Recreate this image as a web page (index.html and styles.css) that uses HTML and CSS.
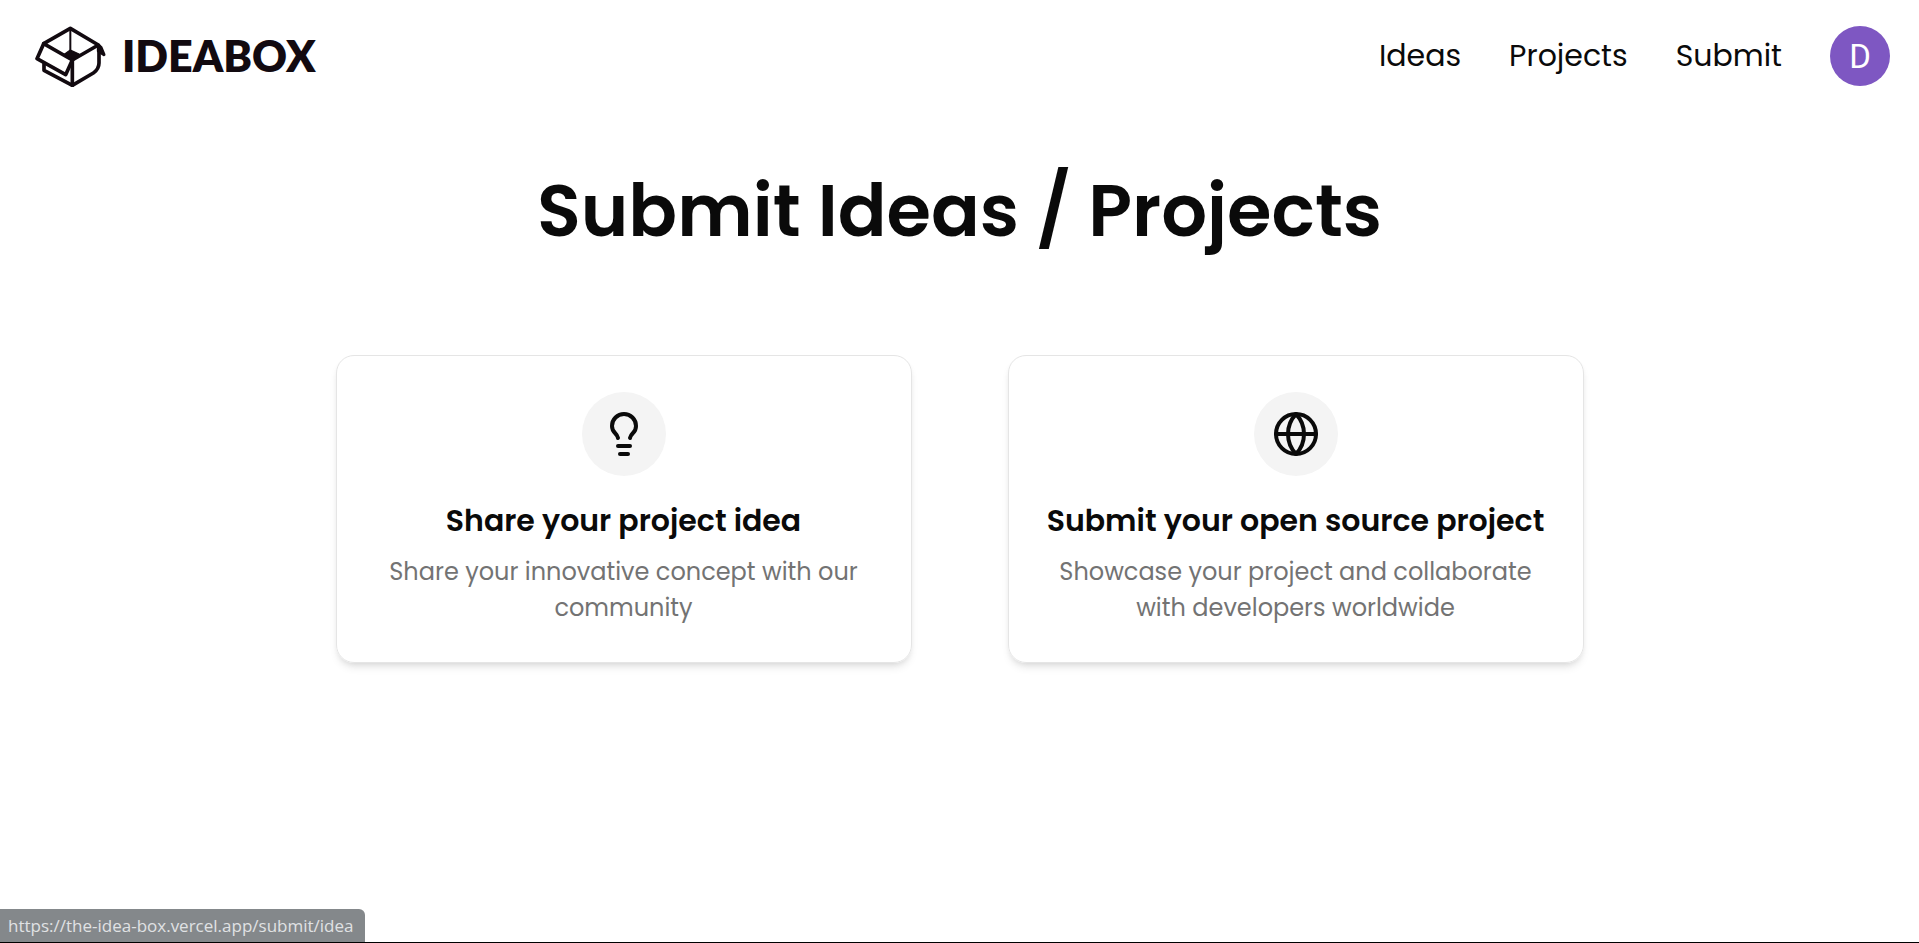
FILE: index.html
```html
<!DOCTYPE html>
<html lang="en">
<head>
    <meta charset="UTF-8">
    <meta name="viewport" content="width=device-width, initial-scale=1.0">
    <title>IdeaBox - Submit</title>
    <link rel="stylesheet" href="styles.css">
</head>
<body>
    <header class="header">
        <a href="/" class="logo">
            <svg class="logo-mark" viewBox="15 15 213 183" fill="none" stroke="currentColor" stroke-width="11" stroke-linejoin="round" stroke-linecap="round">
                <!-- rim -->
                <path d="M41 68 L121 22 L205 72 L127 117 Z"/>
                <path d="M121 22 V92" stroke-width="6"/>
                <path d="M103 100 L121 87 L147 99 L127 116 Z" fill="currentColor" stroke-width="4"/>
                <!-- flaps -->
                <path d="M41 68 L21 113 L107 161 L127 117"/>
                <path d="M205 72 L213 79 L222 101 L205 90 Z" fill="currentColor" stroke-width="9"/>
                <!-- body -->
                <path d="M42 129 V148 L127 193 L190 156 Q207 144 207 126 V76"/>
                <path d="M127 117 V193"/>
            </svg>
            <span class="logo-text">IDEABOX</span>
        </a>
        <nav class="nav">
            <a href="/ideas">Ideas</a>
            <a href="/projects">Projects</a>
            <a href="/submit">Submit</a>
            <button type="button" class="avatar" aria-label="Account">D</button>
        </nav>
    </header>

    <main class="container">
        <h1>Submit Ideas / Projects</h1>

        <div class="cards">
            <a href="/submit/idea" class="card">
                <span class="card-icon">
                    <svg viewBox="0 0 24 24" fill="none" stroke="currentColor" stroke-width="2" stroke-linecap="round" stroke-linejoin="round">
                        <path d="M15 14c.2-1 .7-1.7 1.5-2.5 1-.9 1.5-2.2 1.5-3.5A6 6 0 0 0 6 8c0 1 .2 2.2 1.5 3.5.7.7 1.3 1.5 1.5 2.5"/>
                        <path d="M9 18h6"/>
                        <path d="M10 22h4"/>
                    </svg>
                </span>
                <h2>Share your project idea</h2>
                <p>Share your innovative concept with our community</p>
            </a>

            <a href="/submit/project" class="card">
                <span class="card-icon">
                    <svg viewBox="0 0 24 24" fill="none" stroke="currentColor" stroke-width="2" stroke-linecap="round" stroke-linejoin="round">
                        <circle cx="12" cy="12" r="10"/>
                        <path d="M12 2a14.5 14.5 0 0 0 0 20 14.5 14.5 0 0 0 0-20"/>
                        <path d="M2 12h20"/>
                    </svg>
                </span>
                <h2>Submit your open source project</h2>
                <p>Showcase your project and collaborate with developers worldwide</p>
            </a>
        </div>
    </main>

    <div class="link-status">
        <span>https://the-idea-box.vercel.app/submit/idea</span>
    </div>
</body>
</html>
```
FILE: styles.css
```css
* {
    margin: 0;
    padding: 0;
    box-sizing: border-box;
}

body {
    font-family: 'Poppins', 'Inter', sans-serif;
    background: #ffffff;
    color: #0a0a0a;
    min-height: 100vh;
}

a {
    color: inherit;
    text-decoration: none;
}

.header {
    display: flex;
    justify-content: space-between;
    align-items: center;
    height: 112px;
    padding: 0 29px 0 35px;
}

.logo {
    display: flex;
    align-items: center;
    gap: 16px;
    color: #120a10;
}

.logo-mark {
    width: 71px;
    height: 61px;
}

.logo-text {
    font-family: 'Lato', sans-serif;
    font-size: 43px;
    font-weight: 800;
    line-height: 60px;
}

.nav {
    display: flex;
    align-items: center;
    gap: 48px;
    font-size: 30px;
    line-height: 42px;
}

.avatar {
    width: 60px;
    height: 60px;
    border: none;
    border-radius: 50%;
    background: #7e57c2;
    color: white;
    font-family: 'Roboto', sans-serif;
    font-size: 33px;
    cursor: pointer;
}

.container {
    max-width: 1248px;
    margin: 0 auto;
    padding-top: 63px;
}

h1 {
    font-size: 72px;
    font-weight: 600;
    line-height: 72px;
    text-align: center;
    margin-bottom: 108px;
}

.cards {
    display: grid;
    grid-template-columns: 1fr 1fr;
    gap: 96px;
}

.card {
    display: flex;
    flex-direction: column;
    align-items: center;
    padding: 36px;
    border: 1px solid #e5e5e5;
    border-radius: 18px;
    box-shadow: 0 6px 9px -2px rgba(0, 0, 0, 0.1), 0 3px 6px -3px rgba(0, 0, 0, 0.1);
    text-align: center;
}

.card-icon {
    display: flex;
    align-items: center;
    justify-content: center;
    width: 84px;
    height: 84px;
    margin-bottom: 24px;
    border-radius: 50%;
    background: #f4f4f4;
}

.card-icon svg {
    width: 48px;
    height: 48px;
}

.card h2 {
    font-size: 30px;
    font-weight: 600;
    line-height: 42px;
    margin-bottom: 12px;
    white-space: nowrap;
}

.card p {
    font-size: 24px;
    line-height: 36px;
    color: #737373;
}

/* link preview in the bottom corner */
.link-status {
    position: fixed;
    left: 0;
    right: 0;
    bottom: 0;
    border-bottom: 1px solid #000000;
}

.link-status span {
    display: inline-block;
    padding: 0 12px 0 8px;
    border-top-right-radius: 6px;
    background: #84888b;
    color: #e0e2e4;
    font-family: 'Segoe UI', 'Open Sans', sans-serif;
    font-size: 17px;
    line-height: 33px;
    vertical-align: top;
}

@media (max-width: 1100px) {
    .container {
        padding: 40px 20px;
    }

    .cards {
        grid-template-columns: 1fr;
        gap: 40px;
    }

    .card h2 {
        white-space: normal;
    }
}
```
